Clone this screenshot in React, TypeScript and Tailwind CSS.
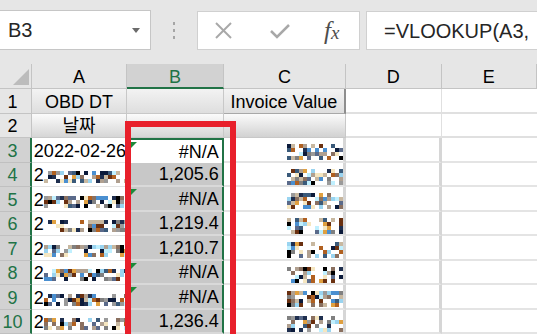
import React from "react";

// seeded random so the blurred cells look the same every render
function rng(seed: number) {
  let a = seed;
  return () => {
    a |= 0;
    a = (a + 0x6d2b79f5) | 0;
    let t = Math.imul(a ^ (a >>> 15), 1 | a);
    t = (t + Math.imul(t ^ (t >>> 7), 61 | t)) ^ t;
    return ((t ^ (t >>> 14)) >>> 0) / 4294967296;
  };
}

const PALETTE = [
  "#0b1a3a", "#000000", "#1f2f4f", "#9ad4f0", "#4a8fd0", "#e0a040", "#b06020",
  "#6a3010", "#808080", "#9a9a9a", "#c8b8a0", "#f5e6c0", "#c0f0ff", "#5a6a8a",
  "#3a5a7a", "#8a7060", "#b0a090",
];

function Mosaic({ seed, cols, rows, size = 4, empty = 0.42 }: { seed: number; cols: number; rows: number; size?: number; empty?: number }) {
  const r = rng(seed);
  const rects: React.ReactNode[] = [];
  for (let y = 0; y < rows; y++) {
    for (let x = 0; x < cols; x++) {
      if (r() < empty) continue;
      const c = PALETTE[Math.floor(r() * PALETTE.length)];
      rects.push(<rect key={`${x}-${y}`} x={x * size} y={y * size} width={size} height={size} fill={c} />);
    }
  }
  return (
    <svg width={cols * size} height={rows * size} className="block shrink-0">
      {rects}
    </svg>
  );
}

function ErrTri() {
  return (
    <svg width="7" height="7" className="absolute left-[3px] top-[2px]">
      <polygon points="0,0 7,0 0,7" fill="#1c8a3a" />
    </svg>
  );
}

const dataRows = [
  { n: 3, a: "2022-02-26", b: "#N/A", err: true },
  { n: 4, b: "1,205.6" },
  { n: 5, b: "#N/A", err: true },
  { n: 6, b: "1,219.4" },
  { n: 7, b: "1,210.7" },
  { n: 8, b: "#N/A", err: true },
  { n: 9, b: "#N/A", err: true },
  { n: 10, b: "1,236.4" },
];

export default function App() {
  return (
    <div className="relative w-[537px] h-[334px] overflow-hidden bg-white font-['Liberation_Sans','Noto_Sans_CJK_KR',sans-serif] text-black">
      {/* formula bar */}
      <div className="h-[64px] bg-[#e6e6e6] flex items-start pt-[10px]">
        <div className="w-[151px] h-[40px] shrink-0 bg-white border border-l-0 border-[#c6c6c6] flex items-center pl-[8px] pr-[10px]">
          <span className="text-[20px] text-[#262626] flex-1">B3</span>
          <svg width="8" height="5">
            <polygon points="0,0 8,0 4,5" fill="#6b6b6b" />
          </svg>
        </div>
        <div className="w-[46px] h-[40px] shrink-0 flex flex-col items-center justify-center gap-[4px]">
          <div className="w-[2px] h-[3px] bg-[#a5a5a5]" />
          <div className="w-[2px] h-[3px] bg-[#a5a5a5]" />
          <div className="w-[2px] h-[3px] bg-[#a5a5a5]" />
        </div>
        <div className="w-[163px] h-[39px] mt-[1px] shrink-0 bg-white border border-[#d0d0d0] flex items-center pl-[17px]">
          <svg width="17" height="17" className="shrink-0">
            <line x1="1" y1="1" x2="16" y2="16" stroke="#a8a8a8" strokeWidth="2" />
            <line x1="16" y1="1" x2="1" y2="16" stroke="#a8a8a8" strokeWidth="2" />
          </svg>
          <svg width="20" height="16" className="shrink-0 ml-[38px]">
            <polyline points="1,8 7,14 19,2" fill="none" stroke="#a8a8a8" strokeWidth="2.5" />
          </svg>
          <span className="ml-[34px] font-['Liberation_Serif',serif] italic text-[25px] text-[#4d4d4d] leading-none">
            f<span className="text-[19px]">x</span>
          </span>
        </div>
        <div className="ml-[6px] w-[220px] h-[39px] mt-[1px] shrink-0 bg-white border border-[#d0d0d0] flex items-center pl-[17px] overflow-hidden">
          <span className="text-[20px] text-[#262626] whitespace-nowrap">=VLOOKUP(A3,</span>
        </div>
      </div>

      {/* column headers */}
      <div className="flex h-[25px] bg-[#e6e6e6] text-[18px] leading-[20px]">
        <div className="w-[32px] border-r border-b border-[#c4c4c4] flex items-end justify-end pr-[2px] pb-[3px]">
          <svg width="16" height="16">
            <polygon points="16,0 16,16 0,16" fill="#bcbcbc" />
          </svg>
        </div>
        <div className="w-[96px] border-r border-b border-[#c4c4c4] flex items-end justify-center pb-[1px]">A</div>
        <div className="w-[97px] bg-[#d2d2d2] border-r border-[#c4c4c4] border-b-2 border-b-[#217346] text-[#217346] flex items-end justify-center">B</div>
        <div className="w-[123px] border-r border-b border-[#c4c4c4] flex items-end justify-center pb-[1px]">C</div>
        <div className="w-[96px] border-r border-b border-[#c4c4c4] flex items-end justify-center pb-[1px]">D</div>
        <div className="w-[96px] border-r border-b border-[#c4c4c4] flex items-end justify-center pb-[1px]">E</div>
      </div>

      {/* row 1 */}
      <div className="flex h-[24.5px] text-[18px] leading-[20px]">
        <div className="w-[32px] bg-[#e6e6e6] border-r border-b border-[#c4c4c4] flex items-end justify-center pr-[6px] pb-[1px]">1</div>
        <div className="w-[96px] bg-gradient-to-b from-[#f3f3f3] to-[#dedede] border-r border-b border-[#c8c8c8] flex items-end justify-center pb-[1px]">OBD DT</div>
        <div className="w-[97px] bg-gradient-to-b from-[#f3f3f3] to-[#dedede] border-r border-b border-[#c8c8c8]" />
        <div className="w-[123px] bg-gradient-to-b from-[#f3f3f3] to-[#dedede] border-r-2 border-b border-r-[#8e8e8e] border-b-[#a8a8a8] flex items-end justify-center pb-[1px] whitespace-nowrap">Invoice Value</div>
        <div className="w-[96px] border-r border-b-2 border-[#e0e0e0]" />
        <div className="w-[96px] border-b-2 border-[#e0e0e0]" />
      </div>

      {/* row 2 */}
      <div className="flex h-[24.5px] text-[18px] leading-[20px]">
        <div className="w-[32px] bg-[#e6e6e6] border-r border-b border-[#c4c4c4] flex items-end justify-center pr-[6px] pb-[1px]">2</div>
        <div className="w-[96px] bg-gradient-to-b from-[#fbfbfb] to-[#d6d6d6] border-r border-b border-[#c8c8c8] flex items-end justify-center pb-[1px]">날짜</div>
        <div className="w-[97px] bg-gradient-to-b from-[#fbfbfb] to-[#d6d6d6] border-r border-b border-[#c8c8c8]" />
        <div className="w-[123px] bg-gradient-to-b from-[#fbfbfb] to-[#d2d2d2] border-r border-b border-[#c8c8c8]" />
        <div className="w-[96px] border-r border-b-2 border-[#e0e0e0]" />
        <div className="w-[96px] border-b-2 border-[#e0e0e0]" />
      </div>

      {/* data rows */}
      {dataRows.map((r, i) => (
        <div key={r.n} className="flex h-[24.5px] text-[18px] leading-[20px]">
          <div className="w-[32px] bg-[#d2d2d2] text-[#217346] border-b border-[#c0c0c0] border-r-2 border-r-[#217346] flex items-end justify-center pr-[5px] pb-[1px]">
            {r.n}
          </div>
          <div className="w-[96px] border-r border-b border-[#e2e2e2] flex items-end pl-[2px] pb-[1px] overflow-hidden whitespace-nowrap">
            {r.a ? (
              <span>{r.a}</span>
            ) : (
              <div className="flex items-end pb-[2px]">
                <span className="leading-[20px] -mb-[2px]">2</span>
                <Mosaic seed={100 + i} cols={21} rows={3} empty={0.35} />
              </div>
            )}
          </div>
          <div
            className={
              "relative w-[97px] border-r-2 border-r-[#217346] flex items-end justify-end pr-[3px] pb-[1px] " +
              (i === 0 ? "bg-white border-t-2 border-t-[#217346]" : "bg-[#c8c8c8] border-b-2 border-b-[#d9d9d9]")
            }
          >
            {r.err && <ErrTri />}
            {r.b}
          </div>
          <div className="w-[123px] border-r-[3px] border-r-[#d6d6d6] border-b-2 border-b-[#e4e4e4] flex items-start justify-end pt-[6px]">
            <Mosaic seed={300 + i * 7} cols={14} rows={4} />
          </div>
          <div className="w-[96px] border-r-[3px] border-r-[#d6d6d6] border-b-2 border-b-[#e4e4e4]" />
          <div className="w-[96px] border-b-2 border-b-[#e4e4e4]" />
        </div>
      ))}

      {/* red annotation box */}
      <div className="absolute left-[125px] top-[121px] w-[111px] h-[260px] border-[6px] border-[#e8202b]" />
    </div>
  );
}
